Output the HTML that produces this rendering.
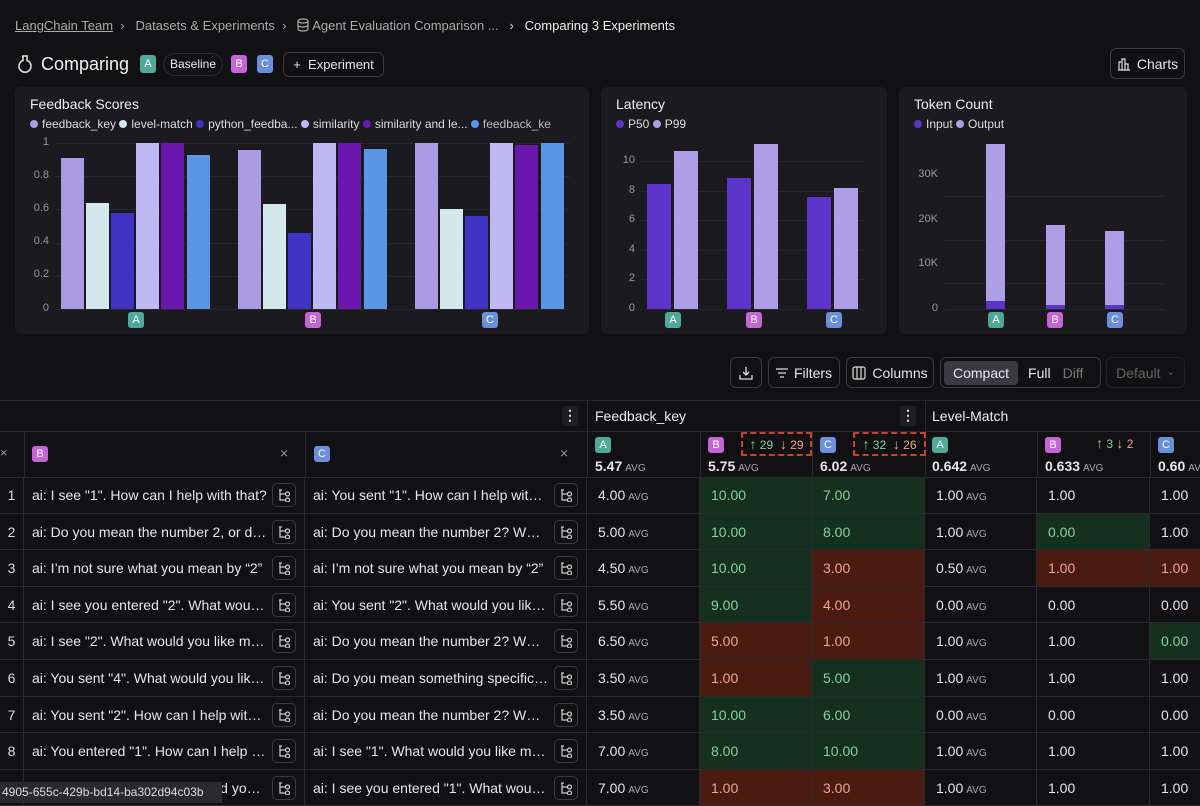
<!DOCTYPE html>
<html><head><meta charset="utf-8"><style>
*{box-sizing:border-box;margin:0;padding:0}
body{width:1200px;height:803px;overflow:hidden;background:#111114;color:#e6e6ea;font-family:"Liberation Sans",sans-serif;position:relative;font-size:14px}
.a{position:absolute}
.bd{display:inline-block;width:16px;height:18px;border-radius:3px;color:#fff;font-size:11px;line-height:18px;text-align:center}
.bA{background:#4fa89a}.bB{background:#c665d8}.bC{background:#6b8fdb}
.card{position:absolute;background:#1a1a1f;border-radius:6px}
.ct{position:absolute;left:15px;top:9px;font-size:14px;color:#eee}
.lg{position:absolute;left:15px;top:30px;font-size:12px;color:#ddd;white-space:nowrap}
.dot{display:inline-block;width:8px;height:8px;border-radius:50%;margin:0 4px 0 0}
.yl{position:absolute;font-size:11px;color:#999;text-align:right;width:30px}
.gl{position:absolute;height:1px;background:#26262c}
.bar{position:absolute}
.btn{position:absolute;border:1px solid #3a3a40;border-radius:6px;font-size:14px;color:#e6e6ea;display:flex;align-items:center;justify-content:center;gap:6px}
.g{display:grid;grid-template-columns:24px 281px 282px 113px 112px 113px 112px 113px 100px;position:absolute;left:0;width:1250px}
.g>div{border-right:1px solid #2a2a30;border-bottom:1px solid #2a2a30;height:36.6px;line-height:36px;font-size:14px;white-space:nowrap;overflow:hidden;position:relative}
.n{text-align:center;color:#ddd}
.t{padding-left:8px;color:#e6e6ea}
.t .tx{display:block;width:235px;overflow:hidden;text-overflow:ellipsis}
.t .ic{position:absolute;right:8px;top:6px;width:24px;height:24px;border:1px solid #3a3a40;border-radius:5px;display:flex;align-items:center;justify-content:center}
.v{padding-left:11px}
.avg{font-size:10px;color:#aaa;margin-left:3px}
.gr{background:#15301f;color:#86d19c}
.rd{background:#4a1c11;color:#f2a590}
</style></head><body>
<svg width="0" height="0" style="position:absolute"><defs><g id="tr"><path d="M2 2v10h5M2 6h5" fill="none" stroke="#ccc" stroke-width="1.2"/><circle cx="9.5" cy="6" r="2" fill="none" stroke="#ccc" stroke-width="1.2"/><circle cx="9.5" cy="12" r="2" fill="none" stroke="#ccc" stroke-width="1.2"/><path d="M1 2h3" stroke="#ccc" stroke-width="1.2"/></g></defs></svg>
<!-- breadcrumb -->
<div class="a" style="left:15px;top:18px;font-size:13px;color:#aaa;white-space:nowrap">
<span style="text-decoration:underline">LangChain Team</span> &nbsp;›&nbsp;&nbsp; Datasets &amp; Experiments &nbsp;›&nbsp;&nbsp; <svg width="12" height="14" viewBox="0 0 12 14" style="vertical-align:-2px"><ellipse cx="6" cy="3" rx="5" ry="2" fill="none" stroke="#aaa" stroke-width="1.2"/><path d="M1 3v8c0 1.1 2.2 2 5 2s5-.9 5-2V3M1 7c0 1.1 2.2 2 5 2s5-.9 5-2" fill="none" stroke="#aaa" stroke-width="1.2"/></svg> Agent Evaluation Comparison ... &nbsp;&nbsp;<span style="color:#ddd">›</span>&nbsp;&nbsp; <span style="color:#eee">Comparing 3 Experiments</span></div>
<!-- title -->
<svg class="a" style="left:17px;top:54px" width="16" height="20" viewBox="0 0 16 20"><path d="M5 2h6M6 2v4.5A6 6 0 1 0 10 6.5V2" fill="none" stroke="#ddd" stroke-width="1.6"/></svg>
<div class="a" style="left:41px;top:54px;font-size:18px;color:#f2f2f2">Comparing</div>
<span class="a bd bA" style="left:140px;top:55px">A</span>
<div class="a" style="left:163px;top:53px;height:23px;padding:0 6px;border:1px solid #2e2e34;border-radius:12px;font-size:12px;line-height:21px;color:#eee">Baseline</div>
<span class="a bd bB" style="left:231px;top:55px">B</span>
<span class="a bd bC" style="left:257px;top:55px">C</span>
<div class="btn" style="left:283px;top:52px;width:101px;height:25px;font-size:13px">+ &nbsp;Experiment</div>
<div class="btn" style="left:1110px;top:48px;width:75px;height:31px"><svg width="14" height="14" viewBox="0 0 14 14"><path d="M1 13h12M2 13V5h3v8M5 13V2h3v11M8 13V7h3v6" fill="none" stroke="#ddd" stroke-width="1.2"/></svg>Charts</div>

<!-- Feedback card -->
<div class="card" style="left:15px;top:87px;width:574px;height:247px">
<div class="ct">Feedback Scores</div>
<div class="lg"><span class="dot" style="background:#ab9be3"></span>feedback_key <span class="dot" style="background:#d3e7ec"></span>level-match <span class="dot" style="background:#3f33c4"></span>python_feedba... <span class="dot" style="background:#c0b8f2"></span>similarity <span class="dot" style="background:#6a17ae"></span>similarity and le... <span class="dot" style="background:#5b95e6"></span><span style="color:#bbb">feedback_ke</span></div>
</div>
<div class="yl" style="left:19px;top:136px">1</div>
<div class="yl" style="left:19px;top:169px">0.8</div>
<div class="yl" style="left:19px;top:202px">0.6</div>
<div class="yl" style="left:19px;top:235px">0.4</div>
<div class="yl" style="left:19px;top:268px">0.2</div>
<div class="yl" style="left:19px;top:302px">0</div>
<div class="gl" style="left:55px;width:515px;top:143px"></div>
<div class="gl" style="left:55px;width:515px;top:176px"></div>
<div class="gl" style="left:55px;width:515px;top:209px"></div>
<div class="gl" style="left:55px;width:515px;top:243px"></div>
<div class="gl" style="left:55px;width:515px;top:276px"></div>
<div class="gl" style="left:55px;width:515px;top:309px"></div>
<div class="bar" style="left:61px;width:23px;top:158px;height:151px;background:#ab9be3"></div>
<div class="bar" style="left:86px;width:23px;top:203px;height:106px;background:#d3e7ec"></div>
<div class="bar" style="left:111px;width:23px;top:213px;height:96px;background:#3f33c4"></div>
<div class="bar" style="left:136px;width:23px;top:143px;height:166px;background:#c0b8f2"></div>
<div class="bar" style="left:161px;width:23px;top:143px;height:166px;background:#6a17ae"></div>
<div class="bar" style="left:187px;width:23px;top:155px;height:154px;background:#5b95e6"></div>
<div class="bar" style="left:238px;width:23px;top:150px;height:159px;background:#ab9be3"></div>
<div class="bar" style="left:263px;width:23px;top:204px;height:105px;background:#d3e7ec"></div>
<div class="bar" style="left:288px;width:23px;top:233px;height:76px;background:#3f33c4"></div>
<div class="bar" style="left:313px;width:23px;top:143px;height:166px;background:#c0b8f2"></div>
<div class="bar" style="left:338px;width:23px;top:143px;height:166px;background:#6a17ae"></div>
<div class="bar" style="left:364px;width:23px;top:149px;height:160px;background:#5b95e6"></div>
<div class="bar" style="left:415px;width:23px;top:143px;height:166px;background:#ab9be3"></div>
<div class="bar" style="left:440px;width:23px;top:209px;height:100px;background:#d3e7ec"></div>
<div class="bar" style="left:465px;width:23px;top:216px;height:93px;background:#3f33c4"></div>
<div class="bar" style="left:490px;width:23px;top:143px;height:166px;background:#c0b8f2"></div>
<div class="bar" style="left:515px;width:23px;top:145px;height:164px;background:#6a17ae"></div>
<div class="bar" style="left:541px;width:23px;top:143px;height:166px;background:#5b95e6"></div>
<span class="a bd bA" style="left:128px;top:312px;height:16px;line-height:16px">A</span>
<span class="a bd bB" style="left:305px;top:312px;height:16px;line-height:16px">B</span>
<span class="a bd bC" style="left:482px;top:312px;height:16px;line-height:16px">C</span>

<!-- Latency card -->
<div class="card" style="left:601px;top:87px;width:286px;height:247px">
<div class="ct">Latency</div>
<div class="lg"><span class="dot" style="background:#5b35c9"></span>P50 <span class="dot" style="background:#ad9ee6"></span>P99</div>
</div>
<div class="yl" style="left:605px;top:154px">10</div>
<div class="yl" style="left:605px;top:184px">8</div>
<div class="yl" style="left:605px;top:213px">6</div>
<div class="yl" style="left:605px;top:243px">4</div>
<div class="yl" style="left:605px;top:272px">2</div>
<div class="yl" style="left:605px;top:302px">0</div>
<div class="gl" style="left:640px;width:225px;top:161px"></div>
<div class="gl" style="left:640px;width:225px;top:191px"></div>
<div class="gl" style="left:640px;width:225px;top:220px"></div>
<div class="gl" style="left:640px;width:225px;top:250px"></div>
<div class="gl" style="left:640px;width:225px;top:279px"></div>
<div class="gl" style="left:640px;width:225px;top:309px"></div>
<div class="bar" style="left:647px;width:24px;top:184px;height:125px;background:#5b35c9"></div>
<div class="bar" style="left:674px;width:24px;top:151px;height:158px;background:#ad9ee6"></div>
<div class="bar" style="left:727px;width:24px;top:178px;height:131px;background:#5b35c9"></div>
<div class="bar" style="left:754px;width:24px;top:144px;height:165px;background:#ad9ee6"></div>
<div class="bar" style="left:807px;width:24px;top:197px;height:112px;background:#5b35c9"></div>
<div class="bar" style="left:834px;width:24px;top:188px;height:121px;background:#ad9ee6"></div>
<span class="a bd bA" style="left:665px;top:312px;height:16px;line-height:16px">A</span>
<span class="a bd bB" style="left:746px;top:312px;height:16px;line-height:16px">B</span>
<span class="a bd bC" style="left:826px;top:312px;height:16px;line-height:16px">C</span>

<!-- Token card -->
<div class="card" style="left:899px;top:87px;width:288px;height:247px">
<div class="ct">Token Count</div>
<div class="lg"><span class="dot" style="background:#5b35c9"></span>Input <span class="dot" style="background:#ad9ee6"></span>Output</div>
</div>
<div class="yl" style="left:908px;top:168px">30K</div>
<div class="yl" style="left:908px;top:213px">20K</div>
<div class="yl" style="left:908px;top:257px">10K</div>
<div class="yl" style="left:908px;top:302px">0</div>
<div class="gl" style="left:945px;width:220px;top:196px"></div>
<div class="gl" style="left:945px;width:220px;top:240px"></div>
<div class="gl" style="left:945px;width:220px;top:283px"></div>
<div class="gl" style="left:945px;width:220px;top:309px"></div>
<div class="bar" style="left:986px;width:19px;top:144px;height:165px;background:#ad9ee6"></div>
<div class="bar" style="left:986px;width:19px;top:301px;height:8px;background:#5b35c9"></div>
<div class="bar" style="left:1046px;width:19px;top:225px;height:84px;background:#ad9ee6"></div>
<div class="bar" style="left:1046px;width:19px;top:305px;height:4px;background:#5b35c9"></div>
<div class="bar" style="left:1105px;width:19px;top:231px;height:78px;background:#ad9ee6"></div>
<div class="bar" style="left:1105px;width:19px;top:305px;height:4px;background:#5b35c9"></div>
<span class="a bd bA" style="left:988px;top:312px;height:16px;line-height:16px">A</span>
<span class="a bd bB" style="left:1047px;top:312px;height:16px;line-height:16px">B</span>
<span class="a bd bC" style="left:1107px;top:312px;height:16px;line-height:16px">C</span>

<!-- toolbar -->
<div class="btn" style="left:730px;top:357px;width:32px;height:31px"><svg width="14" height="14" viewBox="0 0 14 14"><path d="M7 1v8M4 6l3 3 3-3M1 9v4h12V9" fill="none" stroke="#ddd" stroke-width="1.3"/></svg></div>
<div class="btn" style="left:768px;top:357px;width:72px;height:31px"><svg width="12" height="10" viewBox="0 0 12 10"><path d="M0 1h12M2 5h8M4 9h4" stroke="#ddd" stroke-width="1.3"/></svg>Filters</div>
<div class="btn" style="left:846px;top:357px;width:88px;height:31px"><svg width="14" height="14" viewBox="0 0 14 14"><rect x="1" y="1" width="12" height="12" rx="2" fill="none" stroke="#ddd" stroke-width="1.2"/><path d="M5 1v12M9 1v12" stroke="#ddd" stroke-width="1.2"/></svg>Columns</div>
<div class="btn" style="left:940px;top:357px;width:161px;height:31px;justify-content:flex-start;padding:3px;gap:0">
<span style="background:#3a3a40;border-radius:4px;padding:4px 9px;font-size:14px">Compact</span><span style="padding:0 10px">Full</span><span style="color:#777;padding-left:2px">Diff</span></div>
<div class="btn" style="left:1106px;top:357px;width:79px;height:31px;color:#666;border-color:#222">Default <span style="font-size:10px">⌄</span></div>

<!-- table header -->
<div class="a" style="left:0;top:400px;width:1200px;height:1px;background:#2a2a30"></div>
<div class="a" style="left:0;top:431px;width:1200px;height:1px;background:#2a2a30"></div>
<div class="a" style="left:0;top:477px;width:1200px;height:1px;background:#2a2a30"></div>
<div class="a" style="left:587px;top:400px;width:1px;height:77px;background:#2a2a30"></div>
<div class="a" style="left:925px;top:400px;width:1px;height:77px;background:#2a2a30"></div>
<div class="a" style="left:562px;top:406px;width:16px;height:20px;background:#1e1e23;border-radius:3px;text-align:center;color:#ddd;font-weight:bold;line-height:18px">⋮</div>
<div class="a" style="left:595px;top:408px;font-size:14px;color:#eee">Feedback_key</div>
<div class="a" style="left:900px;top:406px;width:16px;height:20px;background:#1e1e23;border-radius:3px;text-align:center;color:#ddd;font-weight:bold;line-height:18px">⋮</div>
<div class="a" style="left:932px;top:408px;font-size:14px;color:#eee">Level-Match</div>
<div class="a" style="left:24px;top:431px;width:1px;height:46px;background:#2a2a30"></div>
<div class="a" style="left:305px;top:431px;width:1px;height:46px;background:#2a2a30"></div>
<div class="a" style="left:700px;top:431px;width:1px;height:46px;background:#2a2a30"></div>
<div class="a" style="left:812px;top:431px;width:1px;height:46px;background:#2a2a30"></div>
<div class="a" style="left:1037px;top:431px;width:1px;height:46px;background:#2a2a30"></div>
<div class="a" style="left:1150px;top:431px;width:1px;height:46px;background:#2a2a30"></div>
<div class="a" style="left:0;top:445px;color:#999;font-size:13px">×</div>
<span class="a bd bB" style="left:32px;top:446px;height:16px;line-height:16px">B</span>
<div class="a" style="left:280px;top:445px;color:#999;font-size:14px">×</div>
<span class="a bd bC" style="left:314px;top:446px;height:16px;line-height:16px">C</span>
<div class="a" style="left:560px;top:445px;color:#999;font-size:14px">×</div>
<span class="a bd bA" style="left:595px;top:437px;height:16px;line-height:16px">A</span>
<div class="a" style="left:595px;top:458px;font-size:14px;font-weight:bold">5.47<span class="avg" style="font-weight:normal">AVG</span></div>
<span class="a bd bB" style="left:708px;top:437px;height:16px;line-height:16px">B</span>
<div class="a" style="left:708px;top:458px;font-size:14px;font-weight:bold">5.75<span class="avg" style="font-weight:normal">AVG</span></div>
<div class="a" style="left:741px;top:432px;width:71px;height:24px;border:2px dashed #c8432e;font-size:12px;line-height:20px;text-align:center;white-space:nowrap"><span style="color:#86d19c"><span style="font-size:14px">↑</span> 29</span>&nbsp; <span style="color:#f2a590"><span style="font-size:14px">↓</span> 29</span></div>
<span class="a bd bC" style="left:820px;top:437px;height:16px;line-height:16px">C</span>
<div class="a" style="left:820px;top:458px;font-size:14px;font-weight:bold">6.02<span class="avg" style="font-weight:normal">AVG</span></div>
<div class="a" style="left:853px;top:432px;width:73px;height:24px;border:2px dashed #c8432e;font-size:12px;line-height:20px;text-align:center;white-space:nowrap"><span style="color:#86d19c"><span style="font-size:14px">↑</span> 32</span>&nbsp; <span style="color:#f2a590"><span style="font-size:14px">↓</span> 26</span></div>
<span class="a bd bA" style="left:932px;top:437px;height:16px;line-height:16px">A</span>
<div class="a" style="left:932px;top:458px;font-size:14px;font-weight:bold">0.642<span class="avg" style="font-weight:normal">AVG</span></div>
<span class="a bd bB" style="left:1045px;top:437px;height:16px;line-height:16px">B</span>
<div class="a" style="left:1045px;top:458px;font-size:14px;font-weight:bold">0.633<span class="avg" style="font-weight:normal">AVG</span></div>
<div class="a" style="left:1096px;top:435px;font-size:12px;white-space:nowrap"><span style="color:#86d19c"><span style="font-size:14px">↑</span> 3</span> <span style="color:#f2a590"><span style="font-size:14px">↓</span> 2</span></div>
<span class="a bd bC" style="left:1158px;top:437px;height:16px;line-height:16px">C</span>
<div class="a" style="left:1158px;top:458px;font-size:14px;font-weight:bold;white-space:nowrap">0.60<span class="avg" style="font-weight:normal">AVG</span></div>

<!-- table body -->
<div class="g" style="top:477px">
<div class="n">1</div><div class="t"><span class="tx">ai: I see "1". How can I help with that?</span><span class="ic"><svg width="13" height="14"><use href="#tr"/></svg></span></div><div class="t"><span class="tx">ai: You sent "1". How can I help with it?</span><span class="ic"><svg width="13" height="14"><use href="#tr"/></svg></span></div><div class="v">4.00<span class="avg">AVG</span></div><div class="v gr">10.00</div><div class="v gr">7.00</div><div class="v">1.00<span class="avg">AVG</span></div><div class="v">1.00</div><div class="v">1.00</div>
<div class="n">2</div><div class="t"><span class="tx">ai: Do you mean the number 2, or did you</span><span class="ic"><svg width="13" height="14"><use href="#tr"/></svg></span></div><div class="t"><span class="tx">ai: Do you mean the number 2? What would</span><span class="ic"><svg width="13" height="14"><use href="#tr"/></svg></span></div><div class="v">5.00<span class="avg">AVG</span></div><div class="v gr">10.00</div><div class="v gr">8.00</div><div class="v">1.00<span class="avg">AVG</span></div><div class="v gr">0.00</div><div class="v">1.00</div>
<div class="n">3</div><div class="t"><span class="tx">ai: I’m not sure what you mean by “2”</span><span class="ic"><svg width="13" height="14"><use href="#tr"/></svg></span></div><div class="t"><span class="tx">ai: I’m not sure what you mean by “2”</span><span class="ic"><svg width="13" height="14"><use href="#tr"/></svg></span></div><div class="v">4.50<span class="avg">AVG</span></div><div class="v gr">10.00</div><div class="v rd">3.00</div><div class="v">0.50<span class="avg">AVG</span></div><div class="v rd">1.00</div><div class="v rd">1.00</div>
<div class="n">4</div><div class="t"><span class="tx">ai: I see you entered "2". What would you</span><span class="ic"><svg width="13" height="14"><use href="#tr"/></svg></span></div><div class="t"><span class="tx">ai: You sent "2". What would you like me</span><span class="ic"><svg width="13" height="14"><use href="#tr"/></svg></span></div><div class="v">5.50<span class="avg">AVG</span></div><div class="v gr">9.00</div><div class="v rd">4.00</div><div class="v">0.00<span class="avg">AVG</span></div><div class="v">0.00</div><div class="v">0.00</div>
<div class="n">5</div><div class="t"><span class="tx">ai: I see "2". What would you like me to</span><span class="ic"><svg width="13" height="14"><use href="#tr"/></svg></span></div><div class="t"><span class="tx">ai: Do you mean the number 2? What would</span><span class="ic"><svg width="13" height="14"><use href="#tr"/></svg></span></div><div class="v">6.50<span class="avg">AVG</span></div><div class="v rd">5.00</div><div class="v rd">1.00</div><div class="v">1.00<span class="avg">AVG</span></div><div class="v">1.00</div><div class="v gr">0.00</div>
<div class="n">6</div><div class="t"><span class="tx">ai: You sent "4". What would you like me</span><span class="ic"><svg width="13" height="14"><use href="#tr"/></svg></span></div><div class="t"><span class="tx">ai: Do you mean something specific by</span><span class="ic"><svg width="13" height="14"><use href="#tr"/></svg></span></div><div class="v">3.50<span class="avg">AVG</span></div><div class="v rd">1.00</div><div class="v gr">5.00</div><div class="v">1.00<span class="avg">AVG</span></div><div class="v">1.00</div><div class="v">1.00</div>
<div class="n">7</div><div class="t"><span class="tx">ai: You sent "2". How can I help with it?</span><span class="ic"><svg width="13" height="14"><use href="#tr"/></svg></span></div><div class="t"><span class="tx">ai: Do you mean the number 2? What would</span><span class="ic"><svg width="13" height="14"><use href="#tr"/></svg></span></div><div class="v">3.50<span class="avg">AVG</span></div><div class="v gr">10.00</div><div class="v gr">6.00</div><div class="v">0.00<span class="avg">AVG</span></div><div class="v">0.00</div><div class="v">0.00</div>
<div class="n">8</div><div class="t"><span class="tx">ai: You entered "1". How can I help you</span><span class="ic"><svg width="13" height="14"><use href="#tr"/></svg></span></div><div class="t"><span class="tx">ai: I see "1". What would you like me to</span><span class="ic"><svg width="13" height="14"><use href="#tr"/></svg></span></div><div class="v">7.00<span class="avg">AVG</span></div><div class="v gr">8.00</div><div class="v gr">10.00</div><div class="v">1.00<span class="avg">AVG</span></div><div class="v">1.00</div><div class="v">1.00</div>
<div class="n">9</div><div class="t"><span class="tx">ai: You entered "4". What would you like me</span><span class="ic"><svg width="13" height="14"><use href="#tr"/></svg></span></div><div class="t"><span class="tx">ai: I see you entered "1". What would you</span><span class="ic"><svg width="13" height="14"><use href="#tr"/></svg></span></div><div class="v">7.00<span class="avg">AVG</span></div><div class="v rd">1.00</div><div class="v rd">3.00</div><div class="v">1.00<span class="avg">AVG</span></div><div class="v">1.00</div><div class="v">1.00</div>
</div>
<div class="a" style="left:0;top:782px;width:222px;height:21px;background:#2a2a2e;font-size:12px;line-height:21px;padding-left:2px;color:#ddd">4905-655c-429b-bd14-ba302d94c03b</div>
</body></html>
